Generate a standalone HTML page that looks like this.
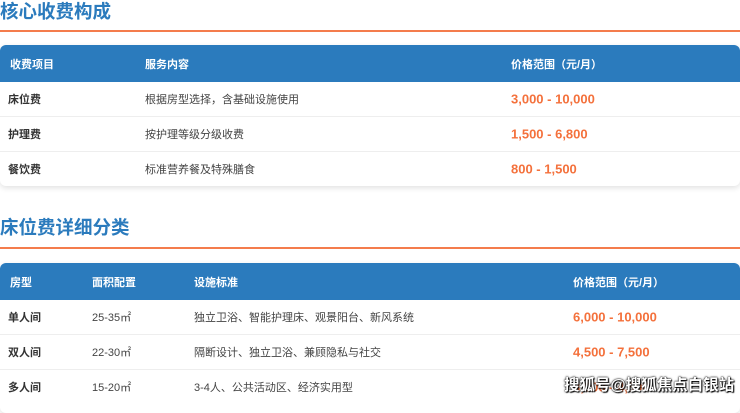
<!DOCTYPE html>
<html><head><meta charset="utf-8"><style>
body{margin:0;width:740px;height:400px;overflow:hidden;background:#fff;font-family:"Liberation Sans","Noto Sans CJK SC",sans-serif;position:relative}
h2{position:absolute;left:0;margin:0;font-size:18.5px;font-weight:bold;color:#2b7bbd;line-height:24px}
.line{position:absolute;left:0;width:740px;height:2px;background:#f47c4c}
.tbl{position:absolute;left:0;width:740px;border-radius:6px;box-shadow:0 2px 6px rgba(0,0,0,.12);overflow:hidden;background:#fff}
.row{position:relative;height:34px;border-bottom:1px solid #eee;font-size:11px;color:#444}
.row.h{height:37px;background:#2b7bbd;color:#fff;font-weight:bold;border:none}
.row span{position:absolute;top:50%;transform:translateY(-50%);white-space:nowrap}
.b{font-weight:bold;color:#333}
.p{color:#f4713c;font-weight:bold;font-size:13px}
.wm{position:absolute;left:564px;top:373px;font-size:15.5px;white-space:nowrap;color:#fff;font-weight:bold;text-shadow:0 0 2px #000,0 0 1px #000,1px 1px 1px #000}
</style></head><body>
<h2 style="top:0">核心收费构成</h2>
<div class="line" style="top:30px"></div>
<div class="tbl" style="top:45px">
<div class="row h"><span style="left:10px">收费项目</span><span style="left:145px">服务内容</span><span style="left:511px">价格范围（元/月）</span></div>
<div class="row"><span class="b" style="left:8px">床位费</span><span style="left:145px">根据房型选择，含基础设施使用</span><span class="p" style="left:511px">3,000 - 10,000</span></div>
<div class="row"><span class="b" style="left:8px">护理费</span><span style="left:145px">按护理等级分级收费</span><span class="p" style="left:511px">1,500 - 6,800</span></div>
<div class="row" style="border:none"><span class="b" style="left:8px">餐饮费</span><span style="left:145px">标准营养餐及特殊膳食</span><span class="p" style="left:511px">800 - 1,500</span></div>
</div>
<h2 style="top:216px">床位费详细分类</h2>
<div class="line" style="top:247px"></div>
<div class="tbl" style="top:263px;height:150px">
<div class="row h"><span style="left:10px">房型</span><span style="left:92px">面积配置</span><span style="left:194px">设施标准</span><span style="left:573px">价格范围（元/月）</span></div>
<div class="row"><span class="b" style="left:8px">单人间</span><span style="left:92px">25-35㎡</span><span style="left:194px">独立卫浴、智能护理床、观景阳台、新风系统</span><span class="p" style="left:573px">6,000 - 10,000</span></div>
<div class="row"><span class="b" style="left:8px">双人间</span><span style="left:92px">22-30㎡</span><span style="left:194px">隔断设计、独立卫浴、兼顾隐私与社交</span><span class="p" style="left:573px">4,500 - 7,500</span></div>
<div class="row" style="border:none"><span class="b" style="left:8px">多人间</span><span style="left:92px">15-20㎡</span><span style="left:194px">3-4人、公共活动区、经济实用型</span><span class="p" style="left:573px">3,000 - 4,500</span></div>
</div>
<div class="wm">搜狐号@搜狐焦点白银站</div>
</body></html>
